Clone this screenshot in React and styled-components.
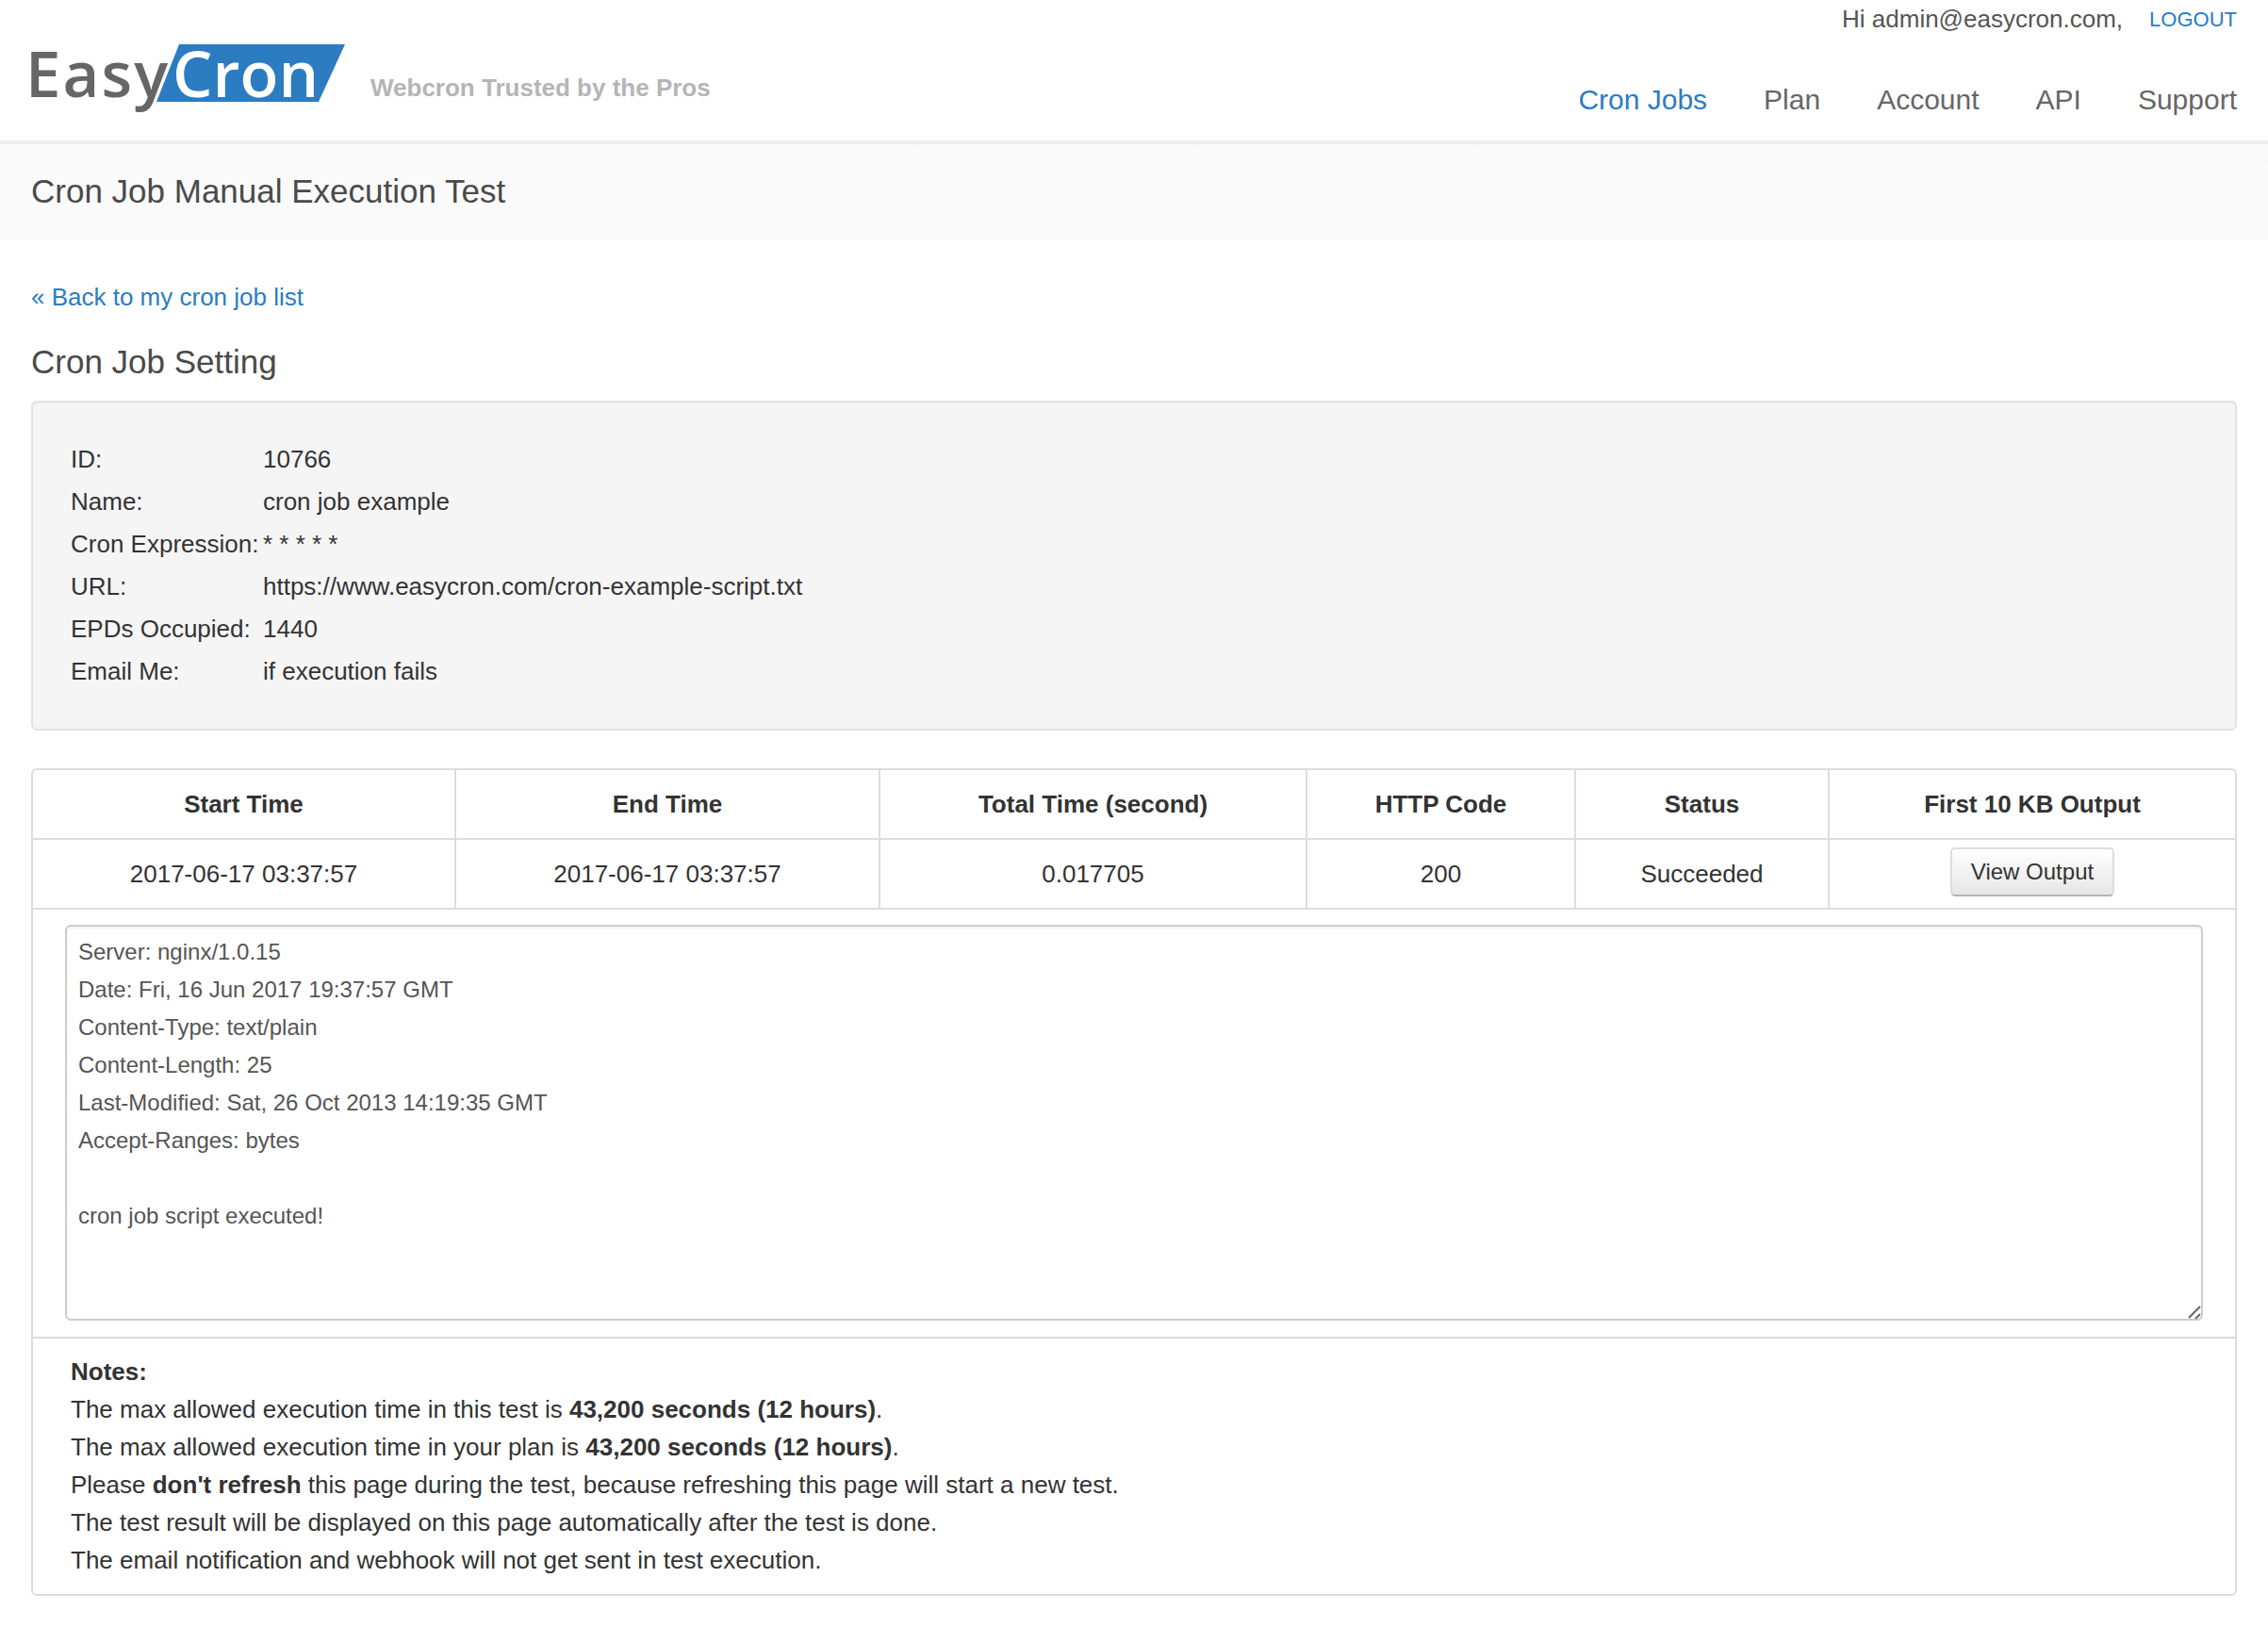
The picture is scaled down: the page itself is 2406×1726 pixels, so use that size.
import React from "react";
import styled, { createGlobalStyle } from "styled-components";

const GlobalStyle = createGlobalStyle`
  html, body {
    margin: 0;
    padding: 0;
    background: #fff;
  }
  body {
    font-family: "Liberation Sans", Arial, sans-serif;
    font-size: 26px;
    line-height: 40px;
    color: #333;
  }
  * {
    box-sizing: border-box;
  }
`;

const Header = styled.header`
  display: flex;
  justify-content: space-between;
  height: 153px;
  padding: 0 33px;
  border-bottom: 4px solid #eee;
`;

const Brand = styled.div`
  display: flex;
  align-items: flex-start;
  padding-top: 47px;
`;

const LogoMark = styled.svg`
  display: block;
  margin: -16px 0 0 -6px;
`;

const Tagline = styled.span`
  margin: 26px 0 0 24px;
  font-size: 26px;
  line-height: 40px;
  font-weight: bold;
  color: #b5b5b5;
`;

const HeaderRight = styled.div`
  display: flex;
  flex-direction: column;
  align-items: flex-end;
`;

const UserLine = styled.div`
  display: flex;
  align-items: center;
  gap: 28px;
  height: 40px;
  color: #555;
`;

const Logout = styled.a`
  padding-top: 2px;
  font-size: 22px;
  color: #2a7cc4;
  text-decoration: none;
`;

const Nav = styled.nav`
  display: flex;
  gap: 60px;
  margin-top: 46px;
`;

const NavItem = styled.a`
  font-size: 30px;
  line-height: 40px;
  text-decoration: none;
  color: ${(props) => (props.$active ? "#2a7cc4" : "#666")};
`;

const TitleBand = styled.div`
  display: flex;
  align-items: center;
  height: 102px;
  padding: 0 33px 3px;
  background: repeating-linear-gradient(135deg, #fbfbfb 0 3px, #f9f9f9 3px 5px);
`;

const PageTitle = styled.h1`
  margin: 0;
  font-size: 35px;
  font-weight: normal;
  color: #4a4a4a;
`;

const Content = styled.main`
  padding: 40px 33px 32px;
`;

const BackLink = styled.a`
  display: block;
  color: #2a7cc4;
  text-decoration: none;
`;

const SectionTitle = styled.h2`
  margin: 29px 0 21px;
  font-size: 35px;
  line-height: 40px;
  font-weight: normal;
  color: #4a4a4a;
`;

const SettingPanel = styled.dl`
  display: grid;
  grid-template-columns: 204px 1fr;
  grid-auto-rows: 45px;
  align-items: center;
  margin: 0 0 40px;
  padding: 37px 40px 39px;
  background: #f5f5f5;
  border: 2px solid #e3e3e3;
  border-radius: 6px;
  box-shadow: inset 0 1px 1px rgba(0, 0, 0, 0.05);
`;

const SettingLabel = styled.dt`
  white-space: nowrap;
`;

const SettingValue = styled.dd`
  margin: 0;
`;

const ResultBox = styled.div`
  border: 2px solid #ddd;
  border-radius: 6px;
  overflow: hidden;
`;

const ResultTable = styled.table`
  width: 100%;
  table-layout: fixed;
  border-collapse: collapse;
`;

const HeadCell = styled.th`
  height: 73px;
  padding: 0;
  font-weight: bold;
  text-align: center;
  border-right: 2px solid #ddd;
  border-bottom: 2px solid #ddd;
  &:last-child {
    border-right: none;
  }
`;

const BodyCell = styled.td`
  height: 74px;
  padding: 0;
  text-align: center;
  border-right: 2px solid #ddd;
  border-bottom: 2px solid #ddd;
  &:last-child {
    border-right: none;
  }
`;

const OutputCell = styled.td`
  padding: 16px 34px 17px 34px;
  border-bottom: 2px solid #ddd;
`;

const OutputWrap = styled.div`
  position: relative;
`;

const OutputArea = styled.textarea`
  display: block;
  width: 100%;
  height: 420px;
  padding: 7px 12px;
  font-family: "Liberation Sans", Arial, sans-serif;
  font-size: 24px;
  line-height: 40px;
  color: #555;
  background: #fff;
  border: 2px solid #ccc;
  border-radius: 6px;
  box-shadow: inset 0 2px 2px rgba(0, 0, 0, 0.06);
  outline: none;
  resize: none;
`;

const ResizeGrip = styled.svg`
  position: absolute;
  right: 0;
  bottom: 0;
  pointer-events: none;
`;

const NotesCell = styled.td`
  padding: 15px 40px 16px;
`;

const NoteLine = styled.div`
  white-space: nowrap;
`;

const ViewButton = styled.button`
  display: block;
  width: 174px;
  height: 52px;
  margin: -4px auto 0;
  padding: 0;
  font-family: "Liberation Sans", Arial, sans-serif;
  font-size: 24px;
  color: #333;
  background: linear-gradient(#fff, #e6e6e6);
  border: 2px solid #ddd;
  border-bottom-color: #b3b3b3;
  border-radius: 5px;
`;

const columns = [
  ["Start Time", 448],
  ["End Time", 450],
  ["Total Time (second)", 453],
  ["HTTP Code", 285],
  ["Status", 269],
  ["First 10 KB Output", 431],
];

const settings = [
  ["ID:", "10766"],
  ["Name:", "cron job example"],
  ["Cron Expression:", "* * * * *"],
  ["URL:", "https://www.easycron.com/cron-example-script.txt"],
  ["EPDs Occupied:", "1440"],
  ["Email Me:", "if execution fails"],
];

const output = `Server: nginx/1.0.15
Date: Fri, 16 Jun 2017 19:37:57 GMT
Content-Type: text/plain
Content-Length: 25
Last-Modified: Sat, 26 Oct 2013 14:19:35 GMT
Accept-Ranges: bytes

cron job script executed!`;

const Logo = () => (
  <LogoMark width="342" height="100" viewBox="0 -16 342 100">
    <polygon points="163,0 339,0 311,61 139,61" fill="#2b7cc1" />
    <text
      x="0"
      y="56"
      fontFamily="Open Sans"
      fontSize="67"
      fontWeight="600"
      fill="#666"
      textLength="151"
    >
      Easy
    </text>
    <text
      x="156"
      y="56"
      fontFamily="Open Sans"
      fontSize="67"
      fontWeight="600"
      fill="#fff"
      textLength="155"
    >
      Cron
    </text>
  </LogoMark>
);

export default function App() {
  return (
    <>
      <GlobalStyle />
      <Header>
        <Brand>
          <Logo />
          <Tagline>Webcron Trusted by the Pros</Tagline>
        </Brand>
        <HeaderRight>
          <UserLine>
            <span>Hi admin@easycron.com,</span>
            <Logout href="#">LOGOUT</Logout>
          </UserLine>
          <Nav>
            <NavItem href="#" $active>
              Cron Jobs
            </NavItem>
            <NavItem href="#">Plan</NavItem>
            <NavItem href="#">Account</NavItem>
            <NavItem href="#">API</NavItem>
            <NavItem href="#">Support</NavItem>
          </Nav>
        </HeaderRight>
      </Header>
      <TitleBand>
        <PageTitle>Cron Job Manual Execution Test</PageTitle>
      </TitleBand>
      <Content>
        <BackLink href="#">« Back to my cron job list</BackLink>
        <SectionTitle>Cron Job Setting</SectionTitle>
        <SettingPanel>
          {settings.map(([label, value]) => (
            <React.Fragment key={label}>
              <SettingLabel>{label}</SettingLabel>
              <SettingValue>{value}</SettingValue>
            </React.Fragment>
          ))}
        </SettingPanel>
        <ResultBox>
          <ResultTable>
            <colgroup>
              {columns.map(([name, width]) => (
                <col key={name} width={width} />
              ))}
            </colgroup>
            <thead>
              <tr>
                {columns.map(([name]) => (
                  <HeadCell key={name}>{name}</HeadCell>
                ))}
              </tr>
            </thead>
            <tbody>
              <tr>
                <BodyCell>2017-06-17 03:37:57</BodyCell>
                <BodyCell>2017-06-17 03:37:57</BodyCell>
                <BodyCell>0.017705</BodyCell>
                <BodyCell>200</BodyCell>
                <BodyCell>Succeeded</BodyCell>
                <BodyCell>
                  <ViewButton>View Output</ViewButton>
                </BodyCell>
              </tr>
              <tr>
                <OutputCell colSpan={6}>
                  <OutputWrap>
                    <OutputArea readOnly defaultValue={output} />
                    <ResizeGrip width="16" height="16" viewBox="0 0 16 16">
                      <path
                        d="M1 13 13 1M8 14l5-5"
                        stroke="#666"
                        strokeWidth="2"
                        fill="none"
                      />
                    </ResizeGrip>
                  </OutputWrap>
                </OutputCell>
              </tr>
              <tr>
                <NotesCell colSpan={6}>
                  <NoteLine>
                    <b>Notes:</b>
                  </NoteLine>
                  <NoteLine>
                    The max allowed execution time in this test is{" "}
                    <b>43,200 seconds (12 hours)</b>.
                  </NoteLine>
                  <NoteLine>
                    The max allowed execution time in your plan is{" "}
                    <b>43,200 seconds (12 hours)</b>.
                  </NoteLine>
                  <NoteLine>
                    Please <b>don't refresh</b> this page during the test,
                    because refreshing this page will start a new test.
                  </NoteLine>
                  <NoteLine>
                    The test result will be displayed on this page automatically
                    after the test is done.
                  </NoteLine>
                  <NoteLine>
                    The email notification and webhook will not get sent in test
                    execution.
                  </NoteLine>
                </NotesCell>
              </tr>
            </tbody>
          </ResultTable>
        </ResultBox>
      </Content>
    </>
  );
}
